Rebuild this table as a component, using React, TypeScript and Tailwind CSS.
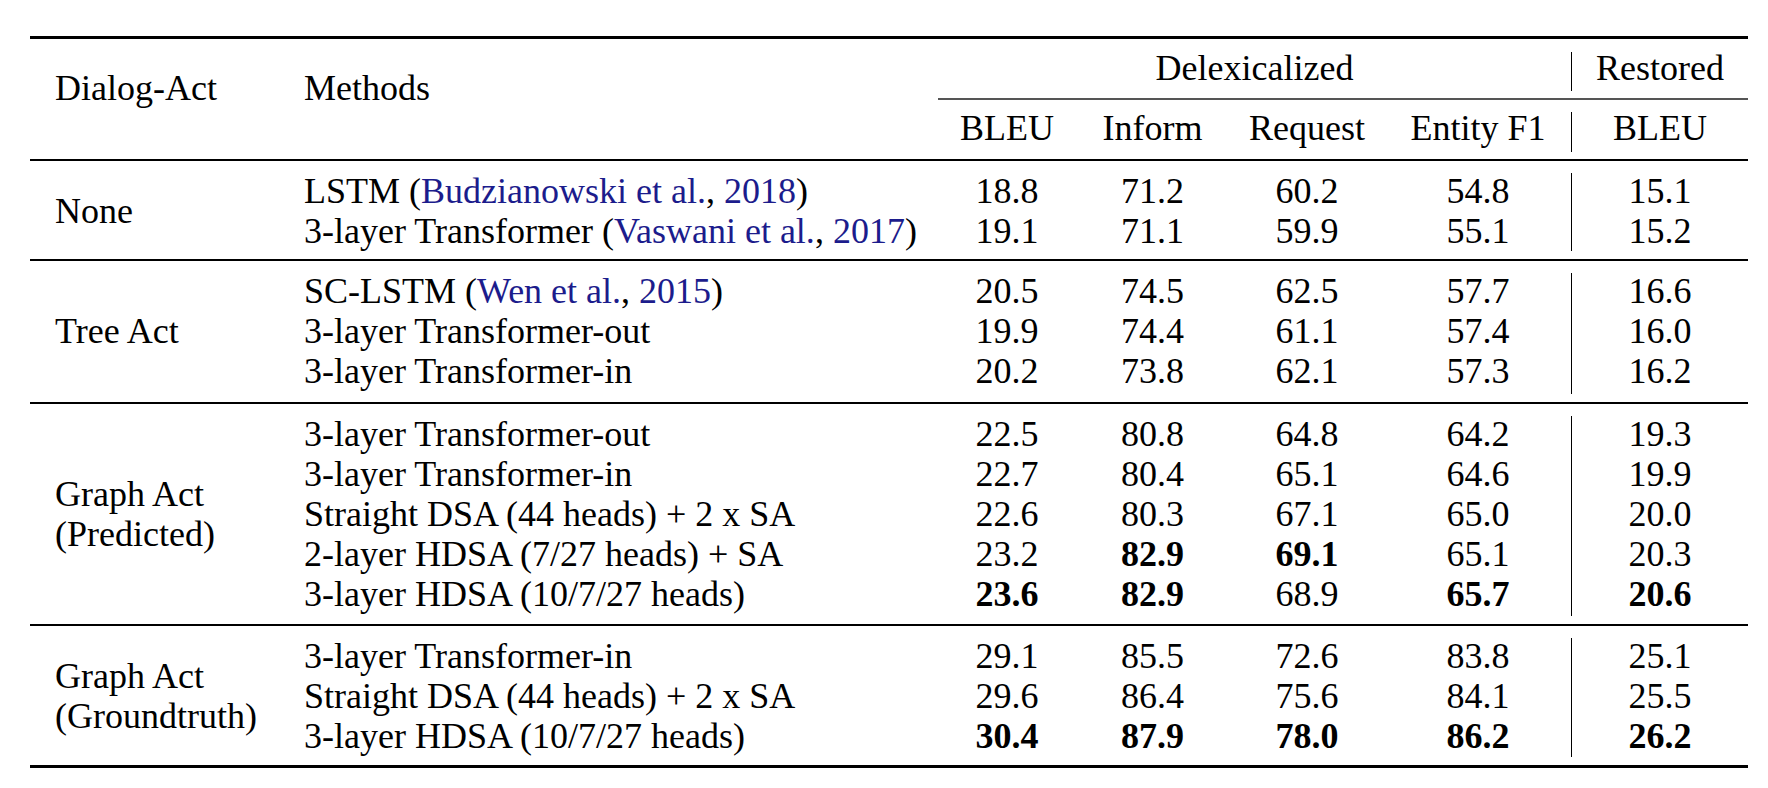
import React from "react";

type Row = { method: React.ReactNode; vals: string[]; restored: string };
type Group = { label: string[]; pad: string; rows: Row[] };

// widths of the four Delexicalized columns
const numW = ["w-[138px]", "w-[153px]", "w-[156px]", "w-[186px]"];

function Cite({ who, year }: { who: string; year: string }) {
  return (
    <>
      (<span className="text-[#1c1c8c]">{who}</span>,{" "}
      <span className="text-[#1c1c8c]">{year}</span>)
    </>
  );
}

// a trailing * marks a best score (bold)
function Num({ v }: { v: string }) {
  const bold = v.endsWith("*");
  return <div className={bold ? "font-bold" : ""}>{bold ? v.slice(0, -1) : v}</div>;
}

const groups: Group[] = [
  {
    label: ["None"],
    pad: "pt-[10px] pb-[8px]",
    rows: [
      {
        method: (
          <>
            LSTM <Cite who="Budzianowski et al." year="2018" />
          </>
        ),
        vals: ["18.8", "71.2", "60.2", "54.8"],
        restored: "15.1",
      },
      {
        method: (
          <>
            3-layer Transformer <Cite who="Vaswani et al." year="2017" />
          </>
        ),
        vals: ["19.1", "71.1", "59.9", "55.1"],
        restored: "15.2",
      },
    ],
  },
  {
    label: ["Tree Act"],
    pad: "pt-[10px] pb-[11px]",
    rows: [
      {
        method: (
          <>
            SC-LSTM <Cite who="Wen et al." year="2015" />
          </>
        ),
        vals: ["20.5", "74.5", "62.5", "57.7"],
        restored: "16.6",
      },
      { method: "3-layer Transformer-out", vals: ["19.9", "74.4", "61.1", "57.4"], restored: "16.0" },
      { method: "3-layer Transformer-in", vals: ["20.2", "73.8", "62.1", "57.3"], restored: "16.2" },
    ],
  },
  {
    label: ["Graph Act", "(Predicted)"],
    pad: "pt-[10px] pb-[10px]",
    rows: [
      { method: "3-layer Transformer-out", vals: ["22.5", "80.8", "64.8", "64.2"], restored: "19.3" },
      { method: "3-layer Transformer-in", vals: ["22.7", "80.4", "65.1", "64.6"], restored: "19.9" },
      { method: "Straight DSA (44 heads) + 2 x SA", vals: ["22.6", "80.3", "67.1", "65.0"], restored: "20.0" },
      { method: "2-layer HDSA (7/27 heads) + SA", vals: ["23.2", "82.9*", "69.1*", "65.1"], restored: "20.3" },
      { method: "3-layer HDSA (10/7/27 heads)", vals: ["23.6*", "82.9*", "68.9", "65.7*"], restored: "20.6*" },
    ],
  },
  {
    label: ["Graph Act", "(Groundtruth)"],
    pad: "pt-[10px] pb-[9px]",
    rows: [
      { method: "3-layer Transformer-in", vals: ["29.1", "85.5", "72.6", "83.8"], restored: "25.1" },
      { method: "Straight DSA (44 heads) + 2 x SA", vals: ["29.6", "86.4", "75.6", "84.1"], restored: "25.5" },
      { method: "3-layer HDSA (10/7/27 heads)", vals: ["30.4*", "87.9*", "78.0*", "86.2*"], restored: "26.2*" },
    ],
  },
];

function Section({ g }: { g: Group }) {
  return (
    <div className="flex border-t-2 border-black">
      <div className={`w-[249px] pl-[25px] flex flex-col justify-center ${g.pad}`}>
        {g.label.map((l) => (
          <div key={l}>{l}</div>
        ))}
      </div>
      <div className={`w-[659px] pl-[25px] ${g.pad}`}>
        {g.rows.map((r, i) => (
          <div key={i} className="whitespace-nowrap">
            {r.method}
          </div>
        ))}
      </div>
      {numW.map((w, c) => (
        <div key={c} className={`${w} text-center ${g.pad}`}>
          {g.rows.map((r, i) => (
            <Num key={i} v={r.vals[c]} />
          ))}
        </div>
      ))}
      <div className="w-[177px] flex">
        <div className="w-px bg-black mt-[12px] mb-[8px]" />
        <div className={`flex-1 text-center ${g.pad}`}>
          {g.rows.map((r, i) => (
            <Num key={i} v={r.restored} />
          ))}
        </div>
      </div>
    </div>
  );
}

export default function App() {
  return (
    <div
      className="min-h-screen bg-white text-black pt-[36px] pl-[30px] text-[36px] leading-[40px]"
      style={{ fontFamily: '"Liberation Serif", "Times New Roman", serif' }}
    >
      <div className="w-[1718px] border-y-[3px] border-black">
        <div className="flex">
          <div className="w-[249px] pl-[25px] pt-[29px]">Dialog-Act</div>
          <div className="w-[659px] pl-[25px] pt-[29px]">Methods</div>
          <div className="w-[810px] flex flex-col">
            <div className="flex">
              <div className="w-[633px] text-center pt-[9px] pb-[10px]">Delexicalized</div>
              <div className="w-[177px] flex">
                <div className="w-px bg-black mt-[13px] mb-[7px]" />
                <div className="flex-1 text-center pt-[9px] pb-[10px]">Restored</div>
              </div>
            </div>
            <div className="h-[2px] bg-[#555]" />
            <div className="flex">
              {["BLEU", "Inform", "Request", "Entity F1"].map((h, i) => (
                <div key={h} className={`${numW[i]} text-center pt-[8px] pb-[11px]`}>
                  {h}
                </div>
              ))}
              <div className="w-[177px] flex">
                <div className="w-px bg-black mt-[12px] mb-[7px]" />
                <div className="flex-1 text-center pt-[8px] pb-[11px]">BLEU</div>
              </div>
            </div>
          </div>
        </div>
        {groups.map((g) => (
          <Section key={g.label.join(" ")} g={g} />
        ))}
      </div>
    </div>
  );
}
